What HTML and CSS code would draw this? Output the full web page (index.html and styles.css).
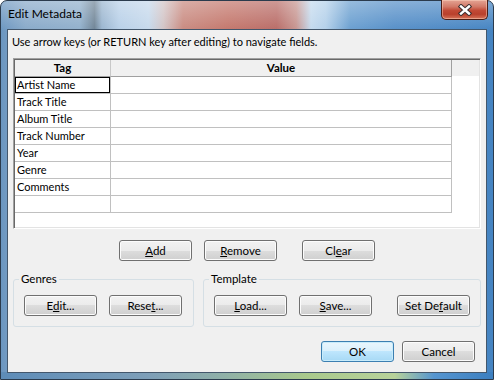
FILE: index.html
```html
<!DOCTYPE html>
<html lang="en">
<head>
  <meta charset="UTF-8">
  <title>Edit Metadata</title>
  <link rel="stylesheet" href="styles.css">
</head>
<body>
  <div class="window">
    <div class="titlebar">
      <span class="title">Edit Metadata</span>
      <button class="close" aria-label="Close">
        <svg width="16" height="12" viewBox="0 0 16 12">
          <path d="M4 2.5 L12 9.5 M12 2.5 L4 9.5" stroke="#3b3030" stroke-width="4.4" stroke-linecap="square" fill="none"/>
          <path d="M4 2.5 L12 9.5 M12 2.5 L4 9.5" stroke="#ffffff" stroke-width="2.4" stroke-linecap="square" fill="none"/>
        </svg>
      </button>
    </div>

    <div class="client">
      <p class="hint">Use arrow keys (or RETURN key after editing) to navigate fields.</p>

      <div class="grid-frame">
        <table class="grid">
          <thead>
            <tr>
              <th class="col-tag">Tag</th>
              <th class="col-value">Value</th>
            </tr>
          </thead>
          <tbody>
            <tr><td class="focus">Artist Name</td><td></td></tr>
            <tr><td>Track Title</td><td></td></tr>
            <tr><td>Album Title</td><td></td></tr>
            <tr><td>Track Number</td><td></td></tr>
            <tr><td>Year</td><td></td></tr>
            <tr><td>Genre</td><td></td></tr>
            <tr><td>Comments</td><td></td></tr>
            <tr><td></td><td></td></tr>
          </tbody>
        </table>
      </div>

      <div class="row-actions">
        <button class="btn btn-add"><u>A</u>dd</button>
        <button class="btn btn-remove"><u>R</u>emove</button>
        <button class="btn btn-clear">Cl<u>e</u>ar</button>
      </div>

      <div class="groups">
        <fieldset class="group group-genres">
          <legend>Genres</legend>
          <div class="group-body">
            <button class="btn">E<u>d</u>it...</button>
            <button class="btn">Rese<u>t</u>...</button>
          </div>
        </fieldset>
        <fieldset class="group group-template">
          <legend>Template</legend>
          <div class="group-body">
            <button class="btn"><u>L</u>oad...</button>
            <button class="btn"><u>S</u>ave...</button>
            <button class="btn btn-wide-gap">Set De<u>f</u>ault</button>
          </div>
        </fieldset>
      </div>

      <div class="row-dialog">
        <button class="btn btn-default">OK</button>
        <button class="btn">Cancel</button>
      </div>
    </div>
  </div>
</body>
</html>
```

FILE: styles.css
```css
* {
  box-sizing: border-box;
}

body {
  margin: 0;
  width: 494px;
  height: 380px;
  overflow: hidden;
  font-family: Lato, "Liberation Sans", sans-serif;
  font-size: 11px;
  color: #000;
}

/* window frame (aero glass) */
.window {
  width: 494px;
  height: 380px;
  border: 1px solid #2b3b4d;
  border-radius: 7px 7px 0 0;
  padding: 0 6px 6px 6px;
  display: flex;
  flex-direction: column;
  background:
    linear-gradient(to right, #5d8cb8 0%, #7e9fb8 30%, #8fb0a8 45%, #a9c98c 62%, #b8d29a 80%, #5595d0 88%, #3c7fc0 100%) bottom / 100% 7px no-repeat,
    linear-gradient(to bottom, rgba(255, 255, 255, 0.3), rgba(255, 255, 255, 0) 30px),
    linear-gradient(to right, #6b96c0 0%, #88a9c9 5%, #91b0cc 16%, #6f8496 19%, #9ab5cf 20.5%, #b8d0e8 24%, #c6d9ec 30%, #d2c4c6 33%, #c98a80 37%, #c4776c 46%, #b96c67 56%, #c79590 60%, #c4daee 63%, #b3d0ea 66%, #6a9fd0 71%, #568fc8 80%, #4584c2 100%);
}

.titlebar {
  height: 28px;
  display: flex;
  justify-content: space-between;
  align-items: flex-start;
}

.title {
  padding: 5px 0 0 1px;
  line-height: 16px;
  font-size: 12px;
  color: #000;
}

.close {
  width: 47px;
  height: 20px;
  margin: -1px -1px 0 0;
  padding: 0;
  border: 1px solid #4a1d16;
  border-top: none;
  border-radius: 0 0 5px 5px;
  background: linear-gradient(to bottom, #e4a494 0%, #d27a68 35%, #c24a36 55%, #b9402c 75%, #d8745a 100%);
  box-shadow: inset 0 0 0 1px rgba(255, 220, 200, 0.45);
  display: flex;
  align-items: center;
  justify-content: center;
}

/* client area */
.client {
  height: 344px;
  border: 1px solid #43576c;
  background: #f0f0f0;
  display: flex;
  flex-direction: column;
}

.hint {
  margin: 0;
  padding: 4px 0 0 4px;
  line-height: 16px;
  font-size: 11px;
}

/* metadata grid */
.grid-frame {
  margin: 8px 0 0 5px;
  width: 468px;
  height: 171px;
  border: 1px solid;
  border-color: #a0a0a0 #ffffff #ffffff #a0a0a0;
  box-shadow: inset 1px 1px 0 #696969, inset -1px -1px 0 #e3e3e3;
  background: linear-gradient(to bottom, #f0f0f0 0, #f0f0f0 17px, #ffffff 17px);
  padding: 1px 0 0 1px;
}

.grid {
  width: 437px;
  table-layout: fixed;
  border-collapse: separate;
  border-spacing: 0;
}

.grid th {
  height: 17px;
  padding: 0;
  line-height: 14px;
  font-size: 11.5px;
  font-weight: bold;
  text-align: center;
  background: #f0f0f0;
  border-right: 1px solid #c8c8c8;
  border-bottom: 1px solid #a0a0a0;
}

.grid th.col-value {
  border-right-color: #a0a0a0;
}

.col-tag {
  width: 96px;
}

.col-value {
  width: 341px;
}

.grid td {
  height: 17px;
  padding: 0 0 0 2px;
  line-height: 14px;
  background: #fff;
  white-space: nowrap;
  border-right: 1px solid #c0c0c0;
  border-bottom: 1px solid #c0c0c0;
}

.grid td.focus {
  box-shadow: inset 0 0 0 1px #000;
}

/* buttons */
.btn {
  width: 73px;
  height: 21px;
  padding: 0;
  border: 1px solid #707070;
  border-radius: 3px;
  background: linear-gradient(to bottom, #f2f2f2 0%, #ebebeb 50%, #dddddd 50%, #cfcfcf 100%);
  box-shadow: inset 0 0 0 1px #fcfcfc;
  font-family: Lato, "Liberation Sans", sans-serif;
  font-size: 11.5px;
  color: #000;
}

.btn u {
  text-underline-offset: 1px;
}

.btn-default {
  border-color: #3c7fb1;
  background: linear-gradient(to bottom, #eaf6fd 0%, #d9f0fc 50%, #bee6fd 50%, #a7d9f5 100%);
  box-shadow: inset 0 0 0 1px #c8ecfb;
}

.row-actions {
  display: flex;
  margin-top: 11px;
  padding-left: 111px;
}

.btn-remove {
  margin-left: 12px;
}

.btn-clear {
  margin-left: 25px;
}

/* group boxes */
.groups {
  display: flex;
  margin: 10px 0 0 5px;
}

.group {
  margin: 0;
  padding: 0 5px;
  border: 1px solid #d5dfe5;
  border-radius: 3px;
  min-width: 0;
}

.group legend {
  padding: 0 2px;
  line-height: 16px;
  font-size: 11.5px;
}

.group-genres {
  width: 181px;
}

.group-template {
  width: 278px;
  margin-left: 9px;
}

.group-body {
  display: flex;
  gap: 12px;
  padding: 8px 5px 10px;
}

.group-body .btn-wide-gap {
  margin-left: 13px;
}

.row-dialog {
  display: flex;
  justify-content: flex-end;
  gap: 8px;
  margin-top: 14px;
  padding-right: 11px;
}
```
